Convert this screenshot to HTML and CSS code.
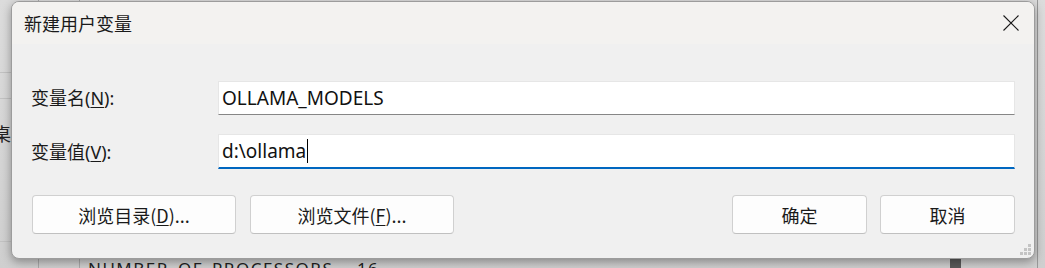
FILE: index.html
```html
<!DOCTYPE html>
<html lang="zh-CN">
<head>
<meta charset="utf-8">
<title>新建用户变量</title>
<link rel="stylesheet" href="styles.css">
</head>
<body>
<div class="backdrop">
  <span class="vline v1"></span>
  <span class="vline v2"></span>
  <span class="vline v3"></span>
  <span class="hline h1"></span>
  <span class="hline h2"></span>
  <span class="hline h3"></span>
  <span class="bg-char">桌</span>
  <span class="bg-row">NUMBER_OF_PROCESSORS&nbsp;&nbsp;&nbsp;&nbsp;16</span>
  <span class="bg-thumb"></span>
</div>

<div class="dialog">
  <div class="titlebar">
    <span class="title">新建用户变量</span>
    <button class="close" aria-label="关闭">
      <svg width="16" height="16" viewBox="0 0 16 16"><path d="M0.5 0.5 L15.5 15.5 M15.5 0.5 L0.5 15.5" stroke="#1b1b1b" stroke-width="1.1" fill="none"/></svg>
    </button>
  </div>
  <div class="content">
    <div class="field">
      <label class="label">变量名(<u>N</u>):</label>
      <div class="input">OLLAMA_MODELS</div>
    </div>
    <div class="field field-2">
      <label class="label">变量值(<u>V</u>):</label>
      <div class="input active">d:\ollama<span class="caret"></span></div>
    </div>
    <div class="buttons">
      <div class="group">
        <button class="btn wide">浏览目录(<u>D</u>)...</button>
        <button class="btn wide">浏览文件(<u>F</u>)...</button>
      </div>
      <div class="group">
        <button class="btn">确定</button>
        <button class="btn">取消</button>
      </div>
    </div>
  </div>
  <svg class="grip" width="11" height="11" viewBox="0 0 11 11">
    <rect x="8" y="0" width="3" height="3" fill="#c4c4c4"/>
    <rect x="4" y="4" width="3" height="3" fill="#c4c4c4"/>
    <rect x="8" y="4" width="3" height="3" fill="#c4c4c4"/>
    <rect x="0" y="8" width="3" height="3" fill="#c4c4c4"/>
    <rect x="4" y="8" width="3" height="3" fill="#c4c4c4"/>
    <rect x="8" y="8" width="3" height="3" fill="#c4c4c4"/>
  </svg>
</div>
</body>
</html>
```

FILE: styles.css
```css
* { box-sizing: border-box; }
html, body {
  margin: 0;
  padding: 0;
  width: 1045px;
  height: 268px;
  overflow: hidden;
  font-family: "Noto Sans", "Noto Sans CJK SC", sans-serif;
  color: #1a1a1a;
}
body { background: #d6d6d6; position: relative; }

.backdrop {
  position: absolute;
  inset: 0;
  overflow: hidden;
  background: linear-gradient(#dcdcdc, #cfcfcf);
}
.vline { position: absolute; top: 0; bottom: 0; width: 1px; background: #a9a9a9; }
.v1 { left: 38px; }
.v2 { left: 79px; }
.v3 { left: 1037px; background: #9a9a9a; }
.hline { position: absolute; left: 0; width: 12px; height: 1px; background: #c2c2c2; }
.h1 { top: 72px; }
.h2 { top: 98px; }
.h3 { top: 241px; }
.bg-char {
  position: absolute;
  left: -7px;
  top: 120px;
  font-family: "Noto Sans CJK SC", sans-serif;
  font-size: 18px;
  color: #222;
}
.bg-row {
  position: absolute;
  left: 88px;
  top: 259px;
  height: 9px;
  overflow: hidden;
  font-size: 17px;
  line-height: 20px;
  letter-spacing: 1.5px;
  color: #222;
  white-space: nowrap;
}
.bg-thumb {
  position: absolute;
  left: 950px;
  top: 258px;
  width: 11px;
  height: 10px;
  background: #5a5a5a;
}

.dialog {
  position: absolute;
  left: 11px;
  top: 1px;
  width: 1024px;
  height: 258px;
  border: 1px solid #9c9c9c;
  border-radius: 8px;
  background: #f0f0f0;
  box-shadow: 0 3px 10px rgba(0, 0, 0, 0.35);
  overflow: hidden;
  display: flex;
  flex-direction: column;
}

.titlebar {
  height: 42px;
  flex: none;
  background: #f3f2f0;
  display: flex;
  align-items: center;
  justify-content: space-between;
  padding: 0 15px 0 12px;
}
.title {
  font-family: "Noto Sans CJK SC", sans-serif;
  font-size: 18px;
  line-height: 1;
  margin-top: -1px;
}
.close {
  border: 0;
  background: none;
  padding: 0;
  width: 16px;
  height: 16px;
  display: flex;
  margin-top: -1px;
}

.content {
  flex: 1;
  display: flex;
  flex-direction: column;
  padding: 37px 19px 0 20px;
}

.field {
  display: flex;
  align-items: center;
}
.field-2 { margin-top: 19px; }

.label {
  width: 187px;
  flex: none;
  font-size: 18px;
  line-height: 1;
  margin-left: -1px;
}
.label u { text-underline-offset: 2px; }

.input {
  flex: 1;
  height: 34px;
  background: #fff;
  border: 1px solid #e6e6e6;
  border-bottom: 1px solid #868686;
  font-size: 19px;
  line-height: 30px;
  padding: 0 3px 1px;
  color: #111;
  display: flex;
  align-items: center;
}
.input.active {
  height: 35px;
  border-bottom: 2px solid #0067c0;
}
.caret {
  display: inline-block;
  width: 1px;
  height: 24px;
  background: #000;
  margin-left: 1px;
}

.buttons {
  display: flex;
  justify-content: space-between;
  margin-top: 26px;
}
.group { display: flex; gap: 14px; }
.group + .group { gap: 13px; }

.btn {
  width: 135px;
  height: 39px;
  background: #fdfdfd;
  border: 1px solid #d0d0d0;
  border-bottom-color: #c0c0c0;
  border-radius: 4px;
  font-family: "Noto Sans CJK SC", sans-serif;
  font-size: 18px;
  color: #1a1a1a;
  padding: 0;
}
.btn.wide { width: 204px; }
.btn u { text-underline-offset: 2px; }

.grip {
  position: absolute;
  right: 3px;
  bottom: 3px;
}
```
